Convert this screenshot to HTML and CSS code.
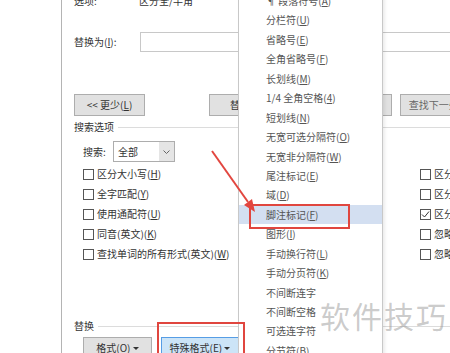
FILE: index.html
```html
<!DOCTYPE html>
<html lang="zh-CN">
<head>
  <meta charset="UTF-8">
  <meta name="viewport" content="width=device-width, initial-scale=1.0">
  <title>查找和替换</title>
  <link rel="stylesheet" href="styles.css">
</head>
<body>
  <div class="page">
    <div class="side"></div>

    <div class="dialog">
      <div class="row-options">
        <span class="label">选项:</span>
        <span>区分全/半角</span>
      </div>

      <div class="row-replace">
        <span class="label">替换为(<u>I</u>):</span>
        <div class="input"></div>
      </div>

      <div class="row-buttons">
        <button class="btn btn-less">&lt;&lt; 更少(<u>L</u>)</button>
        <button class="btn btn-replace">替换(<u>R</u>)</button>
        <button class="btn btn-all">全部替换(<u>A</u>)</button>
        <button class="btn btn-next">查找下一处(<u>F</u>)</button>
      </div>

      <div class="group-title">搜索选项</div>

      <div class="search-row">
        <span class="search-label">搜索:</span>
        <div class="select">
          <span>全部</span>
          <span class="select-arrow">
            <svg width="7" height="4" viewBox="0 0 7 4"><polyline points="0.5,0.5 3.5,3.5 6.5,0.5" fill="none" stroke="#666" stroke-width="1"/></svg>
          </span>
        </div>
      </div>

      <div class="checks">
        <div class="check"><span class="box"></span>区分大小写(<u>H</u>)</div>
        <div class="check"><span class="box"></span>全字匹配(<u>Y</u>)</div>
        <div class="check"><span class="box"></span>使用通配符(<u>U</u>)</div>
        <div class="check"><span class="box"></span>同音(英文)(<u>K</u>)</div>
        <div class="check"><span class="box"></span>查找单词的所有形式(英文)(<u>W</u>)</div>
        <div class="check"><span class="box"></span>区分前缀(<u>X</u>)</div>
        <div class="check"><span class="box"></span>区分后缀(<u>T</u>)</div>
        <div class="check"><span class="box checked"><svg width="9" height="9" viewBox="0 0 9 9"><polyline points="1,4.5 3.5,7 8,1.5" fill="none" stroke="#333" stroke-width="1"/></svg></span>区分全/半角(<u>M</u>)</div>
        <div class="check"><span class="box"></span>忽略标点符号(<u>S</u>)</div>
        <div class="check"><span class="box"></span>忽略空格(<u>W</u>)</div>
      </div>

      <div class="group-title replace-title">替换</div>

      <div class="bottom-buttons">
        <button class="btn btn-format">格式(<u>O</u>) <span class="caret"></span></button>
        <button class="btn btn-special">特殊格式(<u>E</u>) <span class="caret"></span></button>
      </div>
    </div>

    <ul class="menu">
      <li>¶ 段落符号(<u>A</u>)</li>
      <li>分栏符(<u>U</u>)</li>
      <li>省略号(<u>E</u>)</li>
      <li>全角省略号(<u>F</u>)</li>
      <li>长划线(<u>M</u>)</li>
      <li>1/4 全角空格(<u>4</u>)</li>
      <li>短划线(<u>N</u>)</li>
      <li>无宽可选分隔符(<u>O</u>)</li>
      <li>无宽非分隔符(<u>W</u>)</li>
      <li>尾注标记(<u>E</u>)</li>
      <li>域(<u>D</u>)</li>
      <li class="active">脚注标记(<u>F</u>)</li>
      <li>图形(<u>I</u>)</li>
      <li>手动换行符(<u>L</u>)</li>
      <li>手动分页符(<u>K</u>)</li>
      <li>不间断连字</li>
      <li>不间断空格</li>
      <li>可选连字符</li>
      <li>分节符(<u>B</u>)</li>
    </ul>

    <div class="mark mark-item"></div>
    <div class="mark mark-button"></div>

    <svg class="arrow" width="450" height="353" viewBox="0 0 450 353">
      <line x1="212" y1="151" x2="248" y2="202" stroke="#e2463f" stroke-width="2"/>
      <polygon points="255,212 244,205 252,199" fill="#e2463f"/>
    </svg>

    <div class="watermark">软件技巧</div>
  </div>
</body>
</html>
```

FILE: styles.css
```css
body {
  margin: 0;
  background: #fff;
  color: #333;
  font-family: "Noto Sans CJK SC", "Noto Sans", sans-serif;
  font-size: 10px;
}

.page {
  position: relative;
  display: flex;
  width: 450px;
  height: 353px;
  overflow: hidden;
}

.side {
  width: 61px;
  flex: none;
}

.dialog {
  flex: 1;
  border-left: 1px solid #b4b4b4;
  padding-left: 12px;
  line-height: 14px;
}

u {
  text-decoration-thickness: 1px;
  text-underline-offset: 1px;
}

.row-options {
  display: flex;
  height: 14px;
  margin-top: -6px;
}

.row-options .label {
  width: 65px;
}

.row-replace {
  display: flex;
  align-items: center;
  height: 20px;
  margin-top: 24px;
}

.row-replace .label {
  width: 66px;
}

.input {
  flex: 1;
  height: 20px;
  box-sizing: border-box;
  border: 1px solid #c8c8c8;
  margin-right: -10px;
}

.row-buttons {
  display: flex;
  margin-top: 42px;
}

.btn {
  flex: none;
  height: 22px;
  box-sizing: border-box;
  padding: 0;
  border: 1px solid #adadad;
  background: #e1e1e1;
  color: #333;
  font: inherit;
  line-height: 20px;
  white-space: nowrap;
}

.btn-less {
  width: 71px;
}

.btn-replace {
  width: 75px;
  margin-left: 64px;
}

.btn-all {
  width: 100px;
  margin-left: 8px;
}

.btn-next {
  width: 80px;
  margin-left: 8px;
  color: #666;
}

.group-title {
  display: flex;
  align-items: center;
  height: 14px;
  margin-top: 4px;
}

.group-title::after {
  content: "";
  flex: 1;
  border-top: 1px solid #dcdcdc;
  margin-left: 4px;
  margin-right: -10px;
}

.search-row {
  display: flex;
  align-items: center;
  height: 21px;
  margin-top: 7px;
  padding-left: 9px;
}

.search-label {
  width: 30px;
}

.select {
  display: flex;
  align-items: center;
  width: 62px;
  height: 21px;
  box-sizing: border-box;
  border: 1px solid #adadad;
  padding-left: 4px;
}

.select-arrow {
  display: flex;
  align-items: center;
  justify-content: center;
  width: 15px;
  height: 19px;
  margin-left: auto;
  background: #e5e5e5;
}

.checks {
  display: grid;
  grid-template-columns: 337px auto;
  grid-template-rows: repeat(5, 20px);
  grid-auto-flow: column;
  margin-top: 2px;
  padding-left: 9px;
}

.check {
  display: flex;
  align-items: center;
  white-space: nowrap;
}

.box {
  display: flex;
  align-items: center;
  justify-content: center;
  width: 11px;
  height: 11px;
  box-sizing: border-box;
  border: 1px solid #555;
  margin-right: 3px;
  background: #fff;
}

.replace-title {
  margin-top: 55px;
}

.replace-title::after {
  margin-left: 4px;
}

.bottom-buttons {
  display: flex;
  gap: 9px;
  margin-top: 4px;
  padding-left: 9px;
}

.btn-format {
  width: 69px;
}

.btn-special {
  width: 78px;
  background: #cce4f7;
  border-color: #569de5;
}

.caret {
  display: inline-block;
  width: 0;
  height: 0;
  border-left: 3px solid transparent;
  border-right: 3px solid transparent;
  border-top: 3px solid #333;
  vertical-align: 2px;
}

.menu {
  position: absolute;
  left: 238px;
  top: -10px;
  width: 145px;
  box-sizing: border-box;
  margin: 0;
  padding: 0;
  list-style: none;
  background: #fff;
  border: 1px solid #c8c8c8;
  box-shadow: 2px 2px 3px rgba(0, 0, 0, 0.08);
  color: #555;
}

.menu li {
  height: 19.45px;
  line-height: 19.45px;
  padding-left: 27px;
  white-space: nowrap;
}

.menu li.active {
  background: #d3dff1;
}

.mark {
  position: absolute;
  box-sizing: border-box;
  border: 2px solid #e0463f;
}

.mark-item {
  left: 249px;
  top: 204px;
  width: 101px;
  height: 25px;
}

.mark-button {
  left: 157px;
  top: 322px;
  width: 88px;
  height: 50px;
}

.arrow {
  position: absolute;
  left: 0;
  top: 0;
  pointer-events: none;
}

.watermark {
  position: absolute;
  left: 320px;
  top: 298px;
  font-size: 30px;
  line-height: 34px;
  letter-spacing: 2px;
  color: rgba(140, 140, 140, 0.45);
}
```
